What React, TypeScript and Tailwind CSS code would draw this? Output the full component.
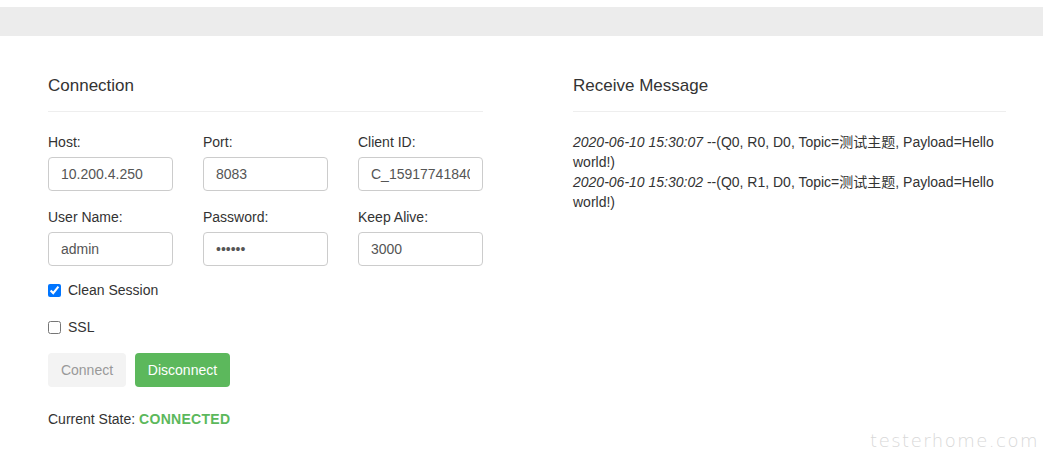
import React from 'react';

const fields = [
  [
    { label: 'Host:', value: '10.200.4.250', type: 'text' },
    { label: 'Port:', value: '8083', type: 'text' },
    { label: 'Client ID:', value: 'C_1591774184043', type: 'text' },
  ],
  [
    { label: 'User Name:', value: 'admin', type: 'text' },
    { label: 'Password:', value: 'public', type: 'password' },
    { label: 'Keep Alive:', value: '3000', type: 'text' },
  ],
];

const messages = [
  { time: '2020-06-10 15:30:07', body: ' --(Q0, R0, D0, Topic=测试主题, Payload=Hello world!)' },
  { time: '2020-06-10 15:30:02', body: ' --(Q0, R1, D0, Topic=测试主题, Payload=Hello world!)' },
];

export default function App() {
  return (
    <div className="relative min-h-screen bg-white text-[#333] text-[14px] leading-[20px] font-['Liberation_Sans','Noto_Sans_CJK_SC',sans-serif]">
      <div className="h-[7px]" />
      <div className="h-[29px] bg-[#ececec]" />

      <div className="flex gap-[90px] pl-[48px] pr-[37px] pt-[40px]">
        {/* connection form */}
        <div className="w-[435px] shrink-0">
          <h3 className="text-[17px] leading-[20px] pb-[15px] border-b border-[#eee]">Connection</h3>

          {fields.map((row, i) => (
            <div key={i} className={`flex gap-[30px] ${i === 0 ? 'mt-[20px]' : 'mt-[16px]'}`}>
              {row.map((f) => (
                <div key={f.label} className="w-[125px]">
                  <label className="block mb-[5px]">{f.label}</label>
                  <input
                    type={f.type}
                    defaultValue={f.value}
                    className="w-full h-[34px] px-[12px] border border-[#ccc] rounded-[4px] text-[#555] text-[14px] outline-none"
                  />
                </div>
              ))}
            </div>
          ))}

          <label className="flex items-center gap-[7px] mt-[14px]">
            <input type="checkbox" defaultChecked className="w-[13px] h-[13px] accent-[#0075ff]" />
            <span>Clean Session</span>
          </label>
          <label className="flex items-center gap-[7px] mt-[17px]">
            <input type="checkbox" className="w-[13px] h-[13px]" />
            <span>SSL</span>
          </label>

          <div className="flex gap-[9px] mt-[16px]">
            <button className="h-[34px] w-[78px] rounded-[4px] bg-[#f3f3f3] text-[#999]">Connect</button>
            <button className="h-[34px] w-[95px] rounded-[4px] bg-[#5cb85c] text-white">Disconnect</button>
          </div>

          <p className="mt-[22px]">
            Current State: <b className="text-[#5cb85c] tracking-[0.3px]">CONNECTED</b>
          </p>
        </div>

        {/* messages */}
        <div className="w-[433px] shrink-0">
          <h3 className="text-[17px] leading-[20px] pb-[15px] border-b border-[#eee]">Receive Message</h3>
          <div className="mt-[20px]">
            {messages.map((m) => (
              <div key={m.time}>
                <i>{m.time}</i>
                {m.body}
              </div>
            ))}
          </div>
        </div>
      </div>

      <div className="absolute right-[4px] top-[431px] text-[#d8d8d8] text-[18px] tracking-[1.5px] font-extralight font-['DejaVu_Sans',sans-serif]">
        testerhome.com
      </div>
    </div>
  );
}
